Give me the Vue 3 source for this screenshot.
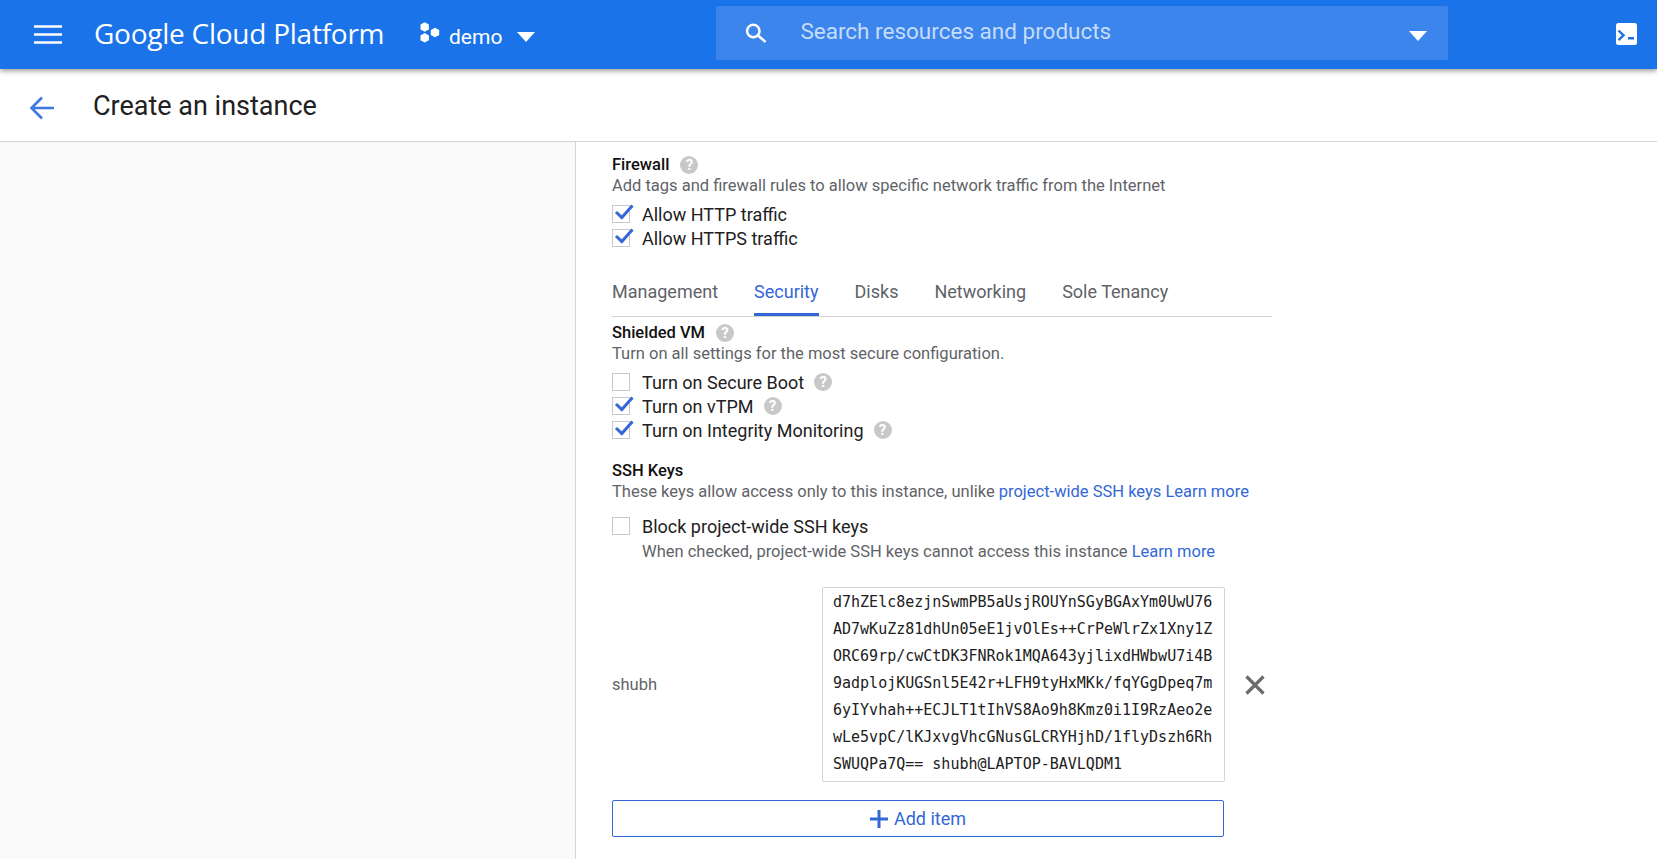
<script setup>
const firewallChecks = [
  { label: 'Allow HTTP traffic', checked: true },
  { label: 'Allow HTTPS traffic', checked: true },
]

const tabs = ['Management', 'Security', 'Disks', 'Networking', 'Sole Tenancy']

const shieldedChecks = [
  { label: 'Turn on Secure Boot', checked: false },
  { label: 'Turn on vTPM', checked: true },
  { label: 'Turn on Integrity Monitoring', checked: true },
]

const keyLines = [
  'd7hZElc8ezjnSwmPB5aUsjROUYnSGyBGAxYm0UwU76',
  'AD7wKuZz81dhUn05eE1jvOlEs++CrPeWlrZx1Xny1Z',
  'ORC69rp/cwCtDK3FNRok1MQA643yjlixdHWbwU7i4B',
  '9adplojKUGSnl5E42r+LFH9tyHxMKk/fqYGgDpeq7m',
  '6yIYvhah++ECJLT1tIhVS8Ao9h8Kmz0i1I9RzAeo2e',
  'wLe5vpC/lKJxvgVhcGNusGLCRYHjhD/1flyDszh6Rh',
  'SWUQPa7Q== shubh@LAPTOP-BAVLQDM1',
]
</script>

<template>
  <div class="page">
    <header class="topbar">
      <svg class="menu" width="28" height="20" viewBox="0 0 28 20">
        <path d="M0 1.5h28M0 9.5h28M0 17.5h28" stroke="#fff" stroke-width="2.6" fill="none" />
      </svg>
      <span class="brand">Google Cloud Platform</span>
      <svg class="dots" width="20" height="21" viewBox="0 0 20 21" fill="#fff">
        <path d="M4.700 .2l4.200 2.400v4.800l-4.200 2.400-4.200-2.400V2.600zM15 5.700l4.200 2.400v4.800L15 15.300l-4.200-2.400V8.100zM4.700 11l4.200 2.400v4.800L4.700 20.600l-4.200-2.400v-4.800z" />
      </svg>
      <span class="project">demo</span>
      <span class="caret caret--project"></span>
      <div class="search">
        <svg class="search__icon" width="24" height="24" viewBox="0 0 24 24" fill="none" stroke="#fff" stroke-width="2.500">
          <circle cx="9.300" cy="10" r="6.200" />
          <path d="M14 14.500l7.500 6.500" />
        </svg>
        <span class="search__text">Search resources and products</span>
        <span class="caret caret--search"></span>
      </div>
      <svg class="shell" width="21" height="22" viewBox="0 0 21 22">
        <rect width="21" height="22" rx="2.500" fill="#fff" />
        <path d="M2.500 7.500l5 4.800-5 4.800" fill="none" stroke="#1a73e8" stroke-width="2.400" />
        <path d="M12 14h6v2.500h-6z" fill="#1a73e8" />
      </svg>
    </header>

    <div class="subbar">
      <svg class="back" width="26" height="26" viewBox="0 0 26 26" fill="none" stroke="#3f78e0" stroke-width="2.600">
        <path d="M25 13H3M13 2.500L2.500 13 13 23.500" />
      </svg>
      <h1 class="title">Create an instance</h1>
    </div>

    <div class="body">
      <aside class="side"></aside>
      <main class="form">
        <div class="label-row">
          <span class="heading">Firewall</span>
          <span class="help">?</span>
        </div>
        <p class="hint">Add tags and firewall rules to allow specific network traffic from the Internet</p>
        <div class="checks checks--firewall">
          <label v-for="c in firewallChecks" :key="c.label" class="check">
            <span class="box">
              <svg v-if="c.checked" class="tick" width="24" height="20" viewBox="0 0 24 20" fill="none" stroke="#3367d6" stroke-width="3">
                <path d="M4 10l5.800 5.500L20.500 3.500" />
              </svg>
            </span>
            <span>{{ c.label }}</span>
          </label>
        </div>

        <nav class="tabs">
          <span v-for="t in tabs" :key="t" class="tab" :class="{ 'tab--active': t === 'Security' }">{{ t }}</span>
        </nav>

        <div class="label-row label-row--shielded">
          <span class="heading">Shielded VM</span>
          <span class="help">?</span>
        </div>
        <p class="hint">Turn on all settings for the most secure configuration.</p>
        <div class="checks checks--shielded">
          <label v-for="c in shieldedChecks" :key="c.label" class="check">
            <span class="box">
              <svg v-if="c.checked" class="tick" width="24" height="20" viewBox="0 0 24 20" fill="none" stroke="#3367d6" stroke-width="3">
                <path d="M4 10l5.800 5.500L20.500 3.500" />
              </svg>
            </span>
            <span>{{ c.label }}</span>
            <span class="help help--check">?</span>
          </label>
        </div>

        <div class="label-row label-row--ssh">
          <span class="heading">SSH Keys</span>
        </div>
        <p class="hint">
          These keys allow access only to this instance, unlike
          <a class="link">project-wide SSH keys</a> <a class="link">Learn more</a>
        </p>
        <label class="check check--block">
          <span class="box"></span>
          <span>Block project-wide SSH keys</span>
        </label>
        <p class="hint hint--block">
          When checked, project-wide SSH keys cannot access this instance
          <a class="link">Learn more</a>
        </p>

        <div class="key-row">
          <span class="key-user">shubh</span>
          <div class="key-box">
            <div v-for="line in keyLines" :key="line">{{ line }}</div>
          </div>
          <svg class="key-remove" width="20" height="20" viewBox="0 0 20 20" fill="none" stroke="#6b6b6b" stroke-width="3.200">
            <path d="M1.500 1.500l17 17M18.500 1.500l-17 17" />
          </svg>
        </div>

        <button class="add">
          <svg width="18" height="18" viewBox="0 0 18 18" fill="none" stroke="#3367d6" stroke-width="3">
            <path d="M9 0v18M0 9h18" />
          </svg>
          <span>Add item</span>
        </button>
      </main>
    </div>
  </div>
</template>

<style>
html,
body {
  margin: 0;
  overflow: hidden;
}
</style>

<style scoped>
.page {
  width: 1657px;
  height: 859px;
  display: flex;
  flex-direction: column;
  overflow: hidden;
  background: #fff;
  font-family: Roboto, "Liberation Sans", sans-serif;
  font-size: 17px;
  color: #212121;
}
.topbar {
  position: relative;
  z-index: 2;
  flex: 0 0 69px;
  display: flex;
  align-items: center;
  background: #1a73e8;
  color: #fff;
  box-shadow: 0 2px 5px rgba(0, 0, 0, 0.4);
}
.menu {
  margin-left: 34px;
}
.brand {
  margin-left: 32px;
  margin-top: -3px;
  width: 290px;
  font-family: "Open Sans", Roboto, sans-serif;
  font-size: 28px;
  letter-spacing: -0.25px;
  white-space: nowrap;
}
.dots {
  margin-left: 36px;
  margin-top: -4px;
}
.project {
  margin-left: 9px;
  font-size: 21px;
  padding-top: 5px;
}
.caret {
  width: 0;
  height: 0;
  border-left: 9px solid transparent;
  border-right: 9px solid transparent;
  border-top: 10px solid #fff;
}
.caret--project {
  margin-left: 15px;
  margin-top: 5px;
}
.search {
  margin-left: 181px;
  width: 732px;
  height: 54px;
  margin-top: -3px;
  display: flex;
  align-items: center;
  background: #3b85ed;
  border-radius: 2px;
}
.search__icon {
  margin-left: 28px;
}
.search__text {
  margin-left: 32px;
  margin-top: -4px;
  font-size: 22.500px;
  color: #c6dcfa;
}
.caret--search {
  margin-left: auto;
  margin-right: 21px;
  margin-top: 5px;
}
.shell {
  margin-left: auto;
  margin-right: 20px;
  margin-top: -2px;
}
.subbar {
  flex: 0 0 73px;
  display: flex;
  align-items: center;
  box-sizing: border-box;
  border-bottom: 1px solid #d4d4d4;
  padding-top: 1px;
}
.back {
  margin-left: 29px;
  margin-top: 4px;
}
.title {
  margin: 0 0 0 38px;
  font-size: 27px;
  font-weight: 400;
  color: #212121;
}
.body {
  flex: 1;
  display: flex;
  min-height: 0;
}
.side {
  flex: 0 0 575px;
  background: #fafafa;
  border-right: 1px solid #d4d4d4;
}
.form {
  margin-left: 36px;
  width: 660px;
  padding-top: 11px;
}
.label-row {
  display: flex;
  align-items: center;
  gap: 11px;
  height: 23px;
}
.label-row--shielded {
  margin-top: 4px;
}
.label-row--ssh {
  margin-top: 17px;
}
.heading {
  font-weight: 500;
  font-size: 16.500px;
  color: #111;
}
.help {
  display: inline-flex;
  align-items: center;
  justify-content: center;
  width: 18px;
  height: 18px;
  border-radius: 50%;
  background: #c8c8c8;
  color: #fff;
  font-size: 15px;
  font-weight: 700;
}
.help--check {
  margin-left: -2px;
}
.hint {
  margin: 0;
  font-size: 16.500px;
  line-height: 20px;
  color: #5f6368;
}
.link {
  color: #3367d6;
}
.checks {
  display: flex;
  flex-direction: column;
}
.checks--firewall {
  margin-top: 6px;
}
.checks--shielded {
  margin-top: 6px;
}
.check {
  display: flex;
  align-items: center;
  gap: 12px;
  height: 24px;
  color: #212121;
  font-size: 18px;
}
.box {
  position: relative;
  flex: 0 0 auto;
  box-sizing: border-box;
  width: 18px;
  height: 18px;
  border: 1px solid #c8c8c8;
  background: #fff;
}
.tick {
  position: absolute;
  left: -1px;
  top: -4px;
}
.tabs {
  display: flex;
  gap: 36px;
  margin-top: 28px;
  width: 660px;
  height: 39px;
  box-sizing: border-box;
  border-bottom: 1px solid #d4d4d4;
}
.tab {
  height: 38px;
  box-sizing: border-box;
  line-height: 24px;
  padding-top: 2px;
  font-size: 18px;
  color: #5f6368;
}
.tab--active {
  color: #3367d6;
  border-bottom: 3px solid #3367d6;
}
.check--block {
  margin-top: 12px;
}
.hint--block {
  margin-top: 4px;
  margin-left: 30px;
}
.key-row {
  display: flex;
  align-items: center;
  margin-top: 25px;
}
.key-user {
  flex: 0 0 210px;
  font-size: 16.500px;
  color: #5f6368;
}
.key-box {
  box-sizing: border-box;
  width: 403px;
  height: 195px;
  padding: 1px 10px;
  border: 1px solid #d4d4d4;
  border-radius: 2px;
  font-family: "DejaVu Sans Mono", "Liberation Mono", monospace;
  font-size: 15px;
  line-height: 27px;
  white-space: nowrap;
  color: #212121;
}
.key-remove {
  margin-left: 20px;
}
.add {
  display: flex;
  align-items: center;
  justify-content: center;
  gap: 6px;
  width: 612px;
  height: 37px;
  margin-top: 18px;
  padding: 0;
  background: #fff;
  border: 1px solid #3367d6;
  border-radius: 2px;
  font-family: inherit;
  font-size: 18px;
  color: #3367d6;
}
</style>
